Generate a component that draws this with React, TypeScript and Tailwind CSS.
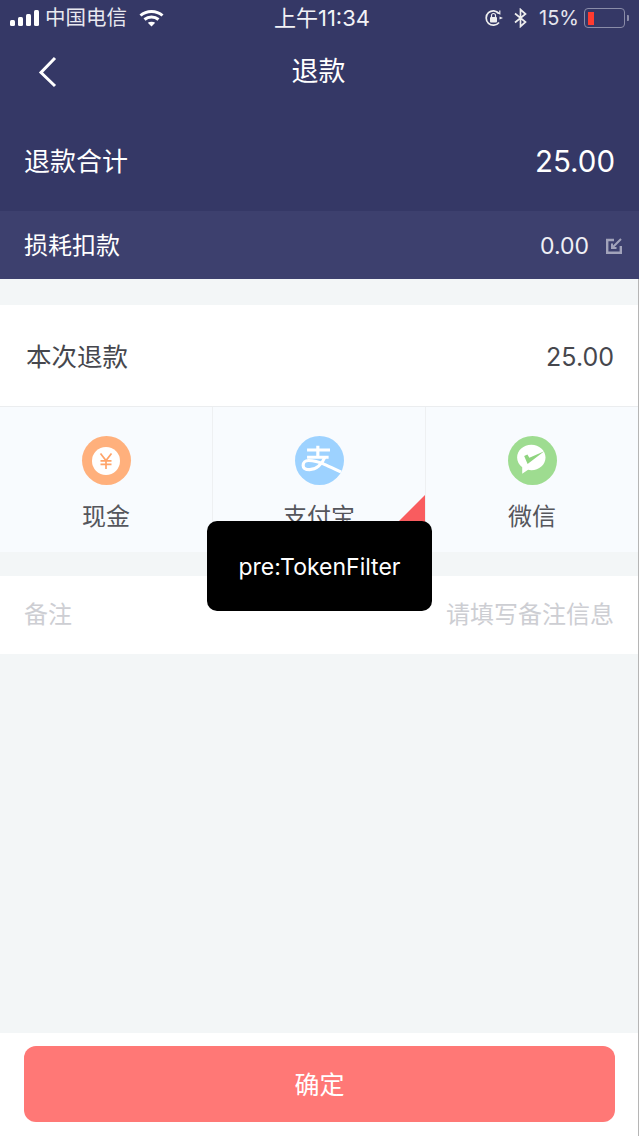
const font = { fontFamily: "Inter, 'Noto Sans CJK SC', sans-serif" };

function StatusBar() {
  return (
    <div className="flex h-[36px] items-center justify-between pl-[10px] pr-[10px] text-white">
      <div className="flex w-[225px] items-center">
        <div className="flex items-end gap-[3px]">
          <span className="h-[6px] w-[5px] rounded-[1.5px] bg-white" />
          <span className="h-[9px] w-[5px] rounded-[1.5px] bg-white" />
          <span className="h-[12px] w-[5px] rounded-[1.5px] bg-white" />
          <span className="h-[16px] w-[5px] rounded-[1.5px] bg-white" />
        </div>
        <span className="ml-[6px] text-[20.5px] leading-none text-[#e9e9f0]">中国电信</span>
        <svg className="ml-[12px]" width="25" height="18" viewBox="0 0 25 18" fill="none" stroke="#fff" strokeWidth="3">
          <path d="M1.5 6.5C7.5 1 17.5 1 23.5 6.5" />
          <path d="M5.5 10.5C9.5 7 15.500 7 19.5 10.500" />
          <path d="M12.500 17.500 L8.800 13.800C10.800 12.400 14.200 12.400 16.200 13.800Z" fill="#fff" stroke="none" />
        </svg>
      </div>
      <span className="text-[22px] leading-none text-[#f2f2f6]">上午11:34</span>
      <div className="flex w-[220px] items-center justify-end">
        <svg width="20" height="18" viewBox="0 0 20 18" fill="none" stroke="#eee" strokeWidth="1.700">
          <path d="M15 13.500A7.200 7.200 0 1 1 15 4.500" />
          <path d="M12.500 3.500L15.800 4.800L15.800 1.500" strokeWidth="1.200" />
          <path d="M15.500 7.500L19 9L15.500 10.500Z" fill="#eee" stroke="none" />
          <rect x="6" y="8" width="7" height="5.500" rx="1" fill="#eee" stroke="none" />
          <path d="M7.500 8V6.500A2 2 0 0 1 11.500 6.500V8" strokeWidth="1.200" />
        </svg>
        <svg className="ml-[10px]" width="13" height="20" viewBox="0 0 13 20" fill="none" stroke="#eee" strokeWidth="1.700">
          <path d="M1 5.500L11.500 14L6.500 18.500V1.500L11.500 6L1 14.500" />
        </svg>
        <span className="ml-[12px] text-[20px] leading-none text-[#e6e6ee]">15%</span>
        <div className="ml-[5px] flex h-[20px] w-[41px] items-center rounded-[4px] border border-[#8a8ca8] px-[3px]">
          <span className="h-[13px] w-[6px] bg-[#ff3b30]" />
        </div>
        <span className="ml-[2px] h-[6px] w-[2px] rounded-r-[1px] bg-[#8a8ca8]" />
      </div>
    </div>
  );
}

function CashIcon() {
  return (
    <div className="flex h-[49px] w-[49px] items-center justify-center rounded-full bg-[#ffb07c]">
      <div className="flex h-[28px] w-[28px] items-center justify-center rounded-full bg-white">
        <svg width="14" height="16" viewBox="0 0 14 16" fill="none" stroke="#ffa469" strokeWidth="1.700">
          <path d="M1.500 0.500L7 7.500L12.500 0.500M7 7.500V16M1.500 7.800H12.500M1.500 11.300H12.500" />
        </svg>
      </div>
    </div>
  );
}

function AlipayIcon() {
  return (
    <svg width="49" height="49" viewBox="0 0 50 50">
      <defs>
        <clipPath id="alipay-clip">
          <circle cx="25" cy="25" r="25" />
        </clipPath>
      </defs>
      <circle cx="25" cy="25" r="25" fill="#9dd2ff" />
      <g clipPath="url(#alipay-clip)" fill="none" stroke="#fff" strokeWidth="3.200">
        <path d="M12.300 14.300H35.700M23.300 10V21.700M12.300 21.700H34.300" />
        <path d="M30.500 21.700C27.500 29 21.500 34.300 15 34.300C10.500 34.300 8.300 32.500 8.300 30C8.300 27 10.500 25 13.800 25C18 25 23 25.800 30 29C36 31.600 44 35.500 54 40" />
      </g>
    </svg>
  );
}

function WechatIcon() {
  return (
    <svg width="49" height="49" viewBox="0 0 50 50">
      <circle cx="25" cy="25" r="25" fill="#9edc90" />
      <path d="M23.800 9C15.800 9 9.300 14.800 9.300 22C9.300 26 11.300 29.500 14.500 32L14.500 38.500L20.500 34.500C21.600 34.800 22.700 35 23.800 35C31.800 35 38.300 29.200 38.300 22C38.300 14.800 31.800 9 23.800 9Z" fill="#fff" />
      <path d="M16.500 20.500L19.800 18.800L21.800 22.300L37 15.500L20 28.500Z" fill="#8fd47f" />
    </svg>
  );
}

function PayOption({ label, icon, selected }: { label: string; icon: React.ReactNode; selected?: boolean }) {
  return (
    <div className="relative flex flex-1 flex-col items-center border-r border-[#eef0f2] pt-[29px] last:border-r-0">
      {icon}
      <span className="mt-[12px] text-[24px] leading-[40px] text-[#55565c]">{label}</span>
      {selected && (
        <span className="absolute bottom-0 right-0 h-[57px] w-[57px] bg-[#f95c5f] [clip-path:polygon(100%_0,100%_100%,0_100%)]" />
      )}
    </div>
  );
}

export default function App() {
  return (
    <div className="relative flex h-[1136px] w-[639px] flex-col overflow-hidden bg-[#f3f6f7]" style={font}>
      <header className="bg-[#353866] text-white">
        <StatusBar />
        <div className="relative flex h-[70px] items-center justify-center pr-[2px] pt-[2px]">
          <svg className="absolute left-[38px] top-[20px]" width="20" height="32" viewBox="0 0 20 32" fill="none" stroke="#fff" strokeWidth="3">
            <path d="M17 2L3 16.500L17 30" />
          </svg>
          <h1 className="text-[27px] font-normal">退款</h1>
        </div>
        <div className="flex h-[105px] items-center justify-between pl-[24px] pr-[24px] pt-[5px]">
          <span className="text-[26px]">退款合计</span>
          <span className="text-[29.5px]">25.00</span>
        </div>
        <div className="flex h-[68px] items-center justify-between bg-[#3d406e] pl-[24px] pr-[17px] pt-[2px]">
          <span className="text-[24px]">损耗扣款</span>
          <div className="flex items-center">
            <span className="text-[23px] text-[#f0f0f5]">0.00</span>
            <svg className="ml-[17px]" width="16" height="16" viewBox="0 0 16 16" fill="none" stroke="#a2a3ba" strokeWidth="2.400">
              <path d="M8 2H1.200V14.800H14.800V8" />
              <path d="M15 1L6.500 9.500M6 5.500V10H10.500" strokeWidth="2" />
            </svg>
          </div>
        </div>
      </header>

      <div className="flex flex-1 flex-col border-r border-[#b5b5b5]">
        <div className="mt-[26px] flex h-[102px] items-center justify-between border-b border-[#ebedef] bg-white pl-[26px] pr-[24px] pt-[3px] text-[#46474d]">
          <span className="text-[25.500px]">本次退款</span>
          <span className="pt-[1px] text-[25px]">25.00</span>
        </div>

        <div className="flex h-[145px] bg-[#f8fbfe]">
          <PayOption label="现金" icon={<CashIcon />} />
          <PayOption label="支付宝" icon={<AlipayIcon />} selected />
          <PayOption label="微信" icon={<WechatIcon />} />
        </div>

        <div className="mt-[24px] flex h-[78px] items-center justify-between bg-white pl-[24px] pr-[24px] text-[24px] text-[#cdced3]">
          <span>备注</span>
          <span>请填写备注信息</span>
        </div>

        <div className="mt-auto bg-white pb-[14px] pl-[24px] pr-[23px] pt-[13px]">
          <button className="h-[76px] w-full rounded-[12px] bg-[#ff7876] pt-[3px] text-[25px] text-white">确定</button>
        </div>
      </div>

      <div className="absolute left-[207px] top-[521px] flex h-[90px] w-[225px] items-center justify-center rounded-[10px] bg-black pt-[2px] text-[23px] text-white">
        pre:TokenFilter
      </div>
    </div>
  );
}
